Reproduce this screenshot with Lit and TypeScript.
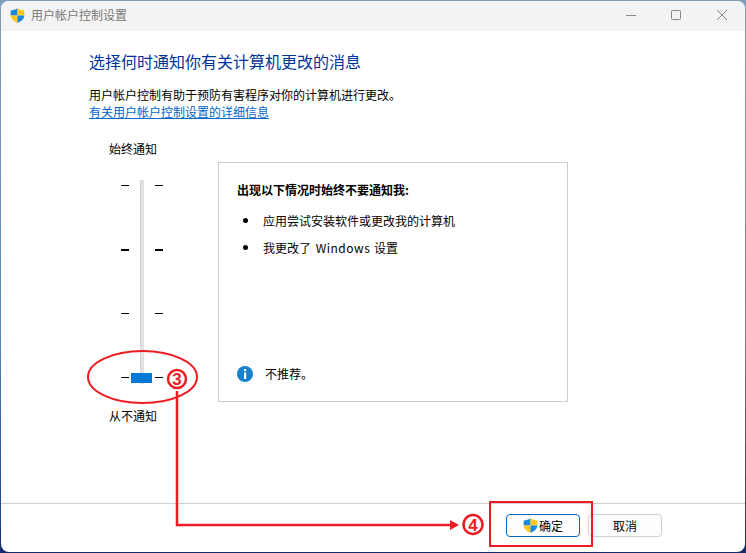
import { LitElement, html, css, svg } from "lit";
import { customElement } from "lit/decorators.js";

const shield = () => html`<svg class="shield" width="15" height="15" viewBox="0.6 0.3 14.800 15.400">
  <path d="M8 .6C6 2 3.600 2.800 1 2.900V8h7z" fill="#1c86d8"/>
  <path d="M8 .6c2 1.400 4.400 2.200 7 2.300V8H8z" fill="#ffc61e"/>
  <path d="M1 8c.3 3.700 3 6.100 7 7.500V8z" fill="#ffc61e"/>
  <path d="M15 8c-.3 3.700-3 6.100-7 7.500V8z" fill="#1c86d8"/>
</svg>`;

@customElement("app-root")
export class AppRoot extends LitElement {
  static styles = css`
    :host {
      display: block;
      position: relative;
      width: 746px;
      height: 553px;
      overflow: hidden;
      background: linear-gradient(180deg, #7f9fbb 0%, #5f86b0 60%, #1d3f8c 95%, #14296b 100%);
      font-family: "Noto Sans CJK SC", "Microsoft YaHei", sans-serif;
      font-size: 12px;
      color: #000;
    }
    .window {
      height: 551px;
      margin: 1px 1px 0 1px;
      background: #fff;
      border-radius: 8px;
      display: flex;
      flex-direction: column;
      overflow: hidden;
      box-sizing: border-box;
    }
    .titlebar {
      height: 30px;
      flex: none;
      background: #f3f3f3;
      display: flex;
      align-items: center;
      padding-left: 9px;
      color: #777;
      line-height: 16px;
    }
    .titlebar .shield { margin-bottom: 1px; }
    .titlebar .name { margin-left: 6px; margin-bottom: 2px; }
    .controls { margin-left: auto; display: flex; }
    .controls svg { width: 46px; height: 30px; display: block; }
    .controls svg * { fill: none; stroke: #8a8a8a; stroke-width: 1; }
    .main {
      flex: 1;
      min-height: 0;
      padding: 19px 0 0 88px;
      display: flex;
      flex-direction: column;
    }
    h1 {
      margin: 0;
      font-size: 16px;
      font-weight: 400;
      line-height: 22px;
      color: #003399;
    }
    .desc { margin-top: 14px; line-height: 17px; }
    .desc a { display: block; color: #0066cc; text-decoration: underline; }
    .panel { display: flex; align-items: flex-start; margin-top: 20px; }
    .slider {
      width: 129px;
      flex: none;
      display: flex;
      flex-direction: column;
    }
    .slider .cap { padding-left: 20px; line-height: 17px; }
    .scale {
      height: 204px;
      margin-top: 23px;
      margin-left: 32px;
      display: grid;
      grid-template-columns: 8px 26px 8px;
      grid-template-rows: repeat(4, 64px);
      position: relative;
    }
    .track {
      position: absolute;
      left: 19px;
      top: 0;
      bottom: 0;
      width: 4px;
      background: #e1e3e3;
      border-left: 1px solid #d4d6d6;
      box-sizing: border-box;
    }
    .thumb {
      position: absolute;
      left: 10px;
      top: 193px;
      width: 21px;
      height: 10px;
      background: #0078d7;
    }
    .tick { height: 1px; background: #000; align-self: start; margin-top: 5px; }
    .tick.bold { height: 2px; }
    .tick.r { grid-column: 3; }
    .slider .cap.low { margin-top: 23px; }
    .box {
      width: 350px;
      height: 240px;
      box-sizing: border-box;
      border: 1px solid #cdcdcd;
      margin-top: 22px;
      display: flex;
      flex-direction: column;
      padding: 18px 18px 19px;
    }
    .box h2 { margin: 0; font-size: 12px; font-weight: 700; line-height: 17px; }
    ul { list-style: none; margin: 14px 0 0; padding: 0; }
    li { display: flex; align-items: center; line-height: 17px; margin-bottom: 10px; }
    li::before {
      content: "";
      width: 5px;
      height: 5px;
      border-radius: 50%;
      background: #000;
      margin: 0 15px 0 6px;
      flex: none;
    }
    .latin { letter-spacing: 0.5px; margin: 0 1px 0 2px; }
    .note { margin-top: auto; display: flex; align-items: center; gap: 12px; line-height: 17px; }
    .note svg { display: block; flex: none; }
    .footer {
      flex: none;
      height: 49px;
      border-top: 1px solid #d0d0d0;
      display: flex;
      justify-content: flex-end;
      gap: 8px;
      padding: 10px 83px 0 0;
      box-sizing: border-box;
    }
    button {
      width: 74px;
      height: 23px;
      box-sizing: border-box;
      border: 1px solid #d0d0d0;
      border-radius: 4px;
      background: #fdfdfd;
      font: inherit;
      color: #000;
      padding: 0;
      display: flex;
      align-items: center;
      justify-content: center;
      line-height: 16px;
    }
    button.primary { border-color: #0067c0; gap: 1px; }
    .notes {
      position: absolute;
      inset: 0;
      pointer-events: none;
    }
    .notes text {
      font-family: "Liberation Sans", sans-serif;
      font-weight: 700;
      font-size: 17px;
      fill: #ed1c24;
      text-anchor: middle;
    }
  `;

  render() {
    return html`
      <div class="window">
        <div class="titlebar">
          ${shield()}
          <span class="name">用户帐户控制设置</span>
          <div class="controls">
            <svg viewBox="0 0 46 30"><path d="M19 14.500h10"/></svg>
            <svg viewBox="0 0 46 30"><rect x="18.500" y="9.500" width="9" height="9" rx="1"/></svg>
            <svg viewBox="0 0 46 30"><path d="M18 9l10 10M28 9L18 19"/></svg>
          </div>
        </div>
        <div class="main">
          <h1>选择何时通知你有关计算机更改的消息</h1>
          <div class="desc">
            用户帐户控制有助于预防有害程序对你的计算机进行更改。
            <a href="#">有关用户帐户控制设置的详细信息</a>
          </div>
          <div class="panel">
            <div class="slider">
              <div class="cap">始终通知</div>
              <div class="scale">
                <div class="track"></div>
                <div class="tick"></div><div class="tick r"></div>
                <div class="tick bold"></div><div class="tick bold r"></div>
                <div class="tick"></div><div class="tick r"></div>
                <div class="tick"></div><div class="tick r"></div>
                <div class="thumb"></div>
              </div>
              <div class="cap low">从不通知</div>
            </div>
            <div class="box">
              <h2>出现以下情况时始终不要通知我:</h2>
              <ul>
                <li>应用尝试安装软件或更改我的计算机</li>
                <li><span>我更改了 <span class="latin">Windows</span> 设置</span></li>
              </ul>
              <div class="note">
                <svg width="16" height="16" viewBox="0 0 16 16">
                  <circle cx="8" cy="8" r="8" fill="#1581d0"/>
                  <rect x="7" y="3" width="2.200" height="2.200" fill="#fff"/>
                  <rect x="7" y="6.500" width="2.200" height="6.500" fill="#fff"/>
                </svg>
                <span>不推荐。</span>
              </div>
            </div>
          </div>
        </div>
        <div class="footer">
          <button class="primary">${shield()}<span>确定</span></button>
          <button>取消</button>
        </div>
      </div>
      <svg class="notes" width="746" height="553" viewBox="0 0 746 553">
        ${svg`
          <g fill="none" stroke="#ed1c24" stroke-width="2">
            <ellipse cx="142.500" cy="377" rx="54.500" ry="26"/>
            <circle cx="177" cy="379" r="9" fill="#fff" stroke-width="2.500"/>
            <path d="M177 391V525H452" stroke-width="2.500"/>
            <circle cx="473" cy="524.500" r="9.500" fill="#fff" stroke-width="2.500"/>
            <rect x="490" y="502" width="102" height="44"/>
          </g>
          <path d="M450 520l9 5-9 5z" fill="#ed1c24"/>
          <text x="177" y="385">3</text>
          <text x="473" y="530.500">4</text>
        `}
      </svg>
    `;
  }
}
